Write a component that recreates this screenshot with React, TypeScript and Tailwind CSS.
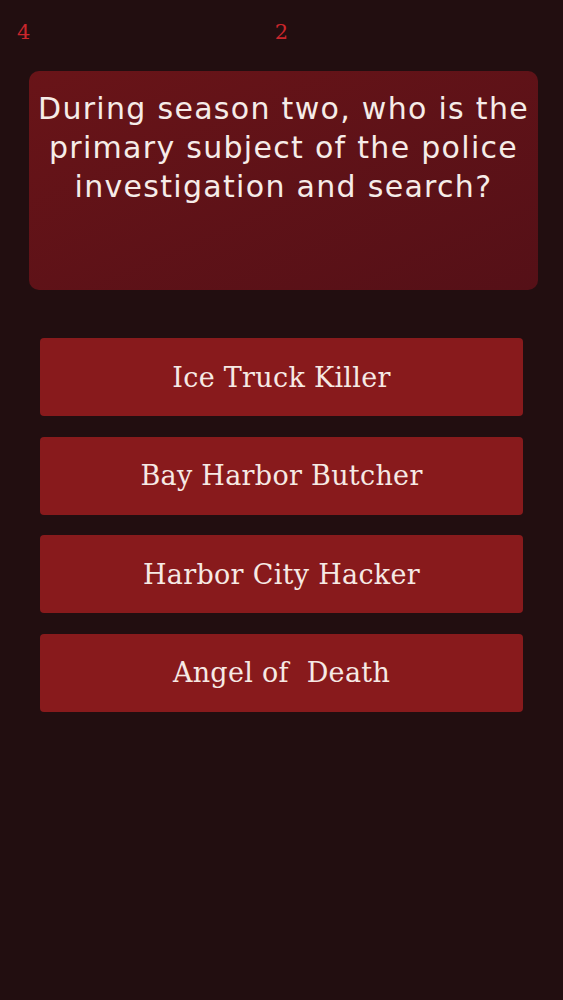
const answers = ["Ice Truck Killer", "Bay Harbor Butcher", "Harbor City Hacker", "Angel of  Death"];

export default function App() {
  return (
    <div className="w-[563px] h-[1000px] bg-[#220e10] flex flex-col">
      {/* score / question counter */}
      <div className="relative h-[64px] pt-[17px] font-['DejaVu_Serif',serif] text-[21px] leading-[30px] text-[#c9262c]">
        <span className="absolute left-[17px] top-[17px]">4</span>
        <div className="text-center">2</div>
      </div>

      <div className="ml-[29px] mr-[25px] mt-[7px] h-[219px] rounded-[10px] bg-gradient-to-br from-[#691418] to-[#551017] pt-[18px] text-center font-['DejaVu_Sans',sans-serif] text-[30px] leading-[39px] tracking-[1.3px] text-[#f6ece8]">
        During season two, who is the primary subject of the police investigation and search?
      </div>

      <div className="mx-[40px] mt-[48px] flex flex-col gap-[20.5px]">
        {answers.map((a) => (
          <button
            key={a}
            className="h-[78px] rounded-[4px] bg-[#881a1c] pt-[2px] font-['DejaVu_Serif',serif] text-[27px] tracking-[0.3px] text-[#f6e9e4] whitespace-pre"
          >
            {a}
          </button>
        ))}
      </div>
    </div>
  );
}
